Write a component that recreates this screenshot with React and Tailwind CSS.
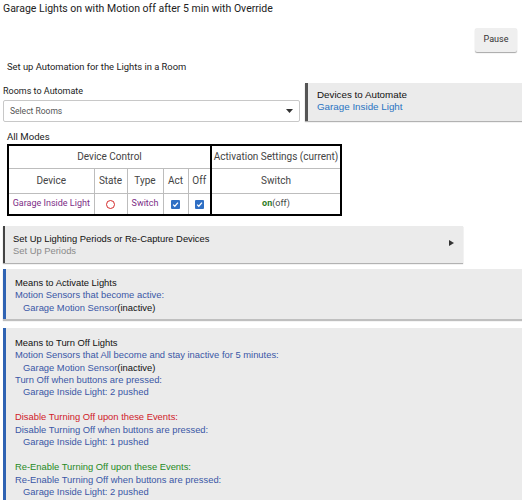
import React from "react";

function Check() {
  return (
    <span className="inline-flex w-[9px] h-[9px] bg-[#2f6fc4] rounded-[1px] items-center justify-center align-middle">
      <svg width="7" height="7" viewBox="0 0 8 8">
        <path d="M1.3 4.2 L3.2 6 L6.8 1.9" stroke="white" strokeWidth="1.4" fill="none" />
      </svg>
    </span>
  );
}

export default function App() {
  const box = "bg-[#ebebeb] font-['Liberation_Sans',Arial,sans-serif] text-[9.4px] leading-[12.3px]";
  const blue = "text-[#3a57a6]";
  return (
    <div className="w-[522px] h-[500px] overflow-hidden bg-white font-['Roboto',sans-serif] text-[#222]">
      <div className="pl-[3px] pt-[2px] text-[10.5px] leading-[14px] text-[#222]">
        Garage Lights on with Motion off after 5 min with Override
      </div>
      <div className="flex justify-end pr-[5px] mt-[12px]">
        <div className="w-[42px] h-[24px] bg-[#efefef] shadow-[0_1px_1px_rgba(0,0,0,0.35)] rounded-[2px] flex items-center justify-center text-[9px] text-[#333]">
          Pause
        </div>
      </div>
      <div className="pl-[7px] mt-[8px] text-[9.4px] leading-[13px] text-[#222]">
        Set up Automation for the Lights in a Room
      </div>
      <div className="flex mt-[10px] items-start">
        <div className="ml-[3px] w-[297px]">
          <div className="text-[9px] leading-[13px] mt-[2px] text-[#222]">Rooms to Automate</div>
          <div className="mt-[2px] h-[22px] border border-[#c8c8c8] rounded-[2px] flex items-center justify-between pl-[6px] pr-[6px] text-[8.5px] text-[#555]">
            <span>Select Rooms</span>
            <svg width="7" height="4" viewBox="0 0 7 4"><path d="M0 0 H7 L3.5 4 Z" fill="#333" /></svg>
          </div>
        </div>
        <div className={`ml-[5px] flex-1 h-[38px] border-l-[3px] border-[#555] bg-[#ebebeb] font-['Liberation_Sans',Arial,sans-serif] text-[9.8px] leading-[12.3px] shadow-[0_1px_1px_rgba(0,0,0,0.3)] pl-[9px] pt-[6px]`}>
          <div className="text-[#111]">Devices to Automate</div>
          <div className="text-[#2a74c2]">Garage Inside Light</div>
        </div>
      </div>
      <div className="pl-[7px] mt-[8px] text-[9.6px] leading-[13px] text-[#222]">All Modes</div>
      <div className="ml-[7px] mt-[1px] w-[335px]">
        <table className="border-collapse border-2 border-black text-[10px] text-[#444] w-full" style={{ tableLayout: "fixed" }}>
          <colgroup>
            <col style={{ width: 86 }} />
            <col style={{ width: 33 }} />
            <col style={{ width: 36 }} />
            <col style={{ width: 25 }} />
            <col style={{ width: 23 }} />
            <col />
          </colgroup>
          <tbody>
            <tr className="h-[23px]">
              <td colSpan={5} className="text-center border border-[#bdbdbd] border-r-2 border-r-black">Device Control</td>
              <td className="text-center border border-[#bdbdbd] whitespace-nowrap">Activation Settings (current)</td>
            </tr>
            <tr className="h-[25px]">
              <td className="text-center border border-[#bdbdbd]">Device</td>
              <td className="text-center border border-[#bdbdbd]">State</td>
              <td className="text-center border border-[#bdbdbd]">Type</td>
              <td className="text-center border border-[#bdbdbd]">Act</td>
              <td className="text-center border border-[#bdbdbd] border-r-2 border-r-black">Off</td>
              <td className="text-center border border-[#bdbdbd]">Switch</td>
            </tr>
            <tr className="h-[22px]">
              <td className="text-center border border-[#bdbdbd] text-[9px] text-[#7d2d86] whitespace-nowrap">Garage Inside Light</td>
              <td className="text-center border border-[#bdbdbd]">
                <span className="inline-block w-[9px] h-[9px] rounded-full border-[1.5px] border-[#d42a2a] align-middle" />
              </td>
              <td className="text-center border border-[#bdbdbd] text-[9px] text-[#7d2d86]">Switch</td>
              <td className="text-center border border-[#bdbdbd]"><Check /></td>
              <td className="text-center border border-[#bdbdbd] border-r-2 border-r-black"><Check /></td>
              <td className="text-center border border-[#bdbdbd] text-[9px]">
                <span className="text-[#2e7d1f] font-bold">on</span>(off)
              </td>
            </tr>
          </tbody>
        </table>
      </div>
      <div className={`ml-[3px] mt-[10px] w-[460px] h-[37px] border-l-[2px] border-[#444] ${box} shadow-[0_1px_1px_rgba(0,0,0,0.3)] pl-[8px] pt-[7px] flex justify-between`}>
        <div>
          <div className="text-[#111]">Set Up Lighting Periods or Re-Capture Devices</div>
          <div className="text-[#8a8a8a]">Set Up Periods</div>
        </div>
        <div className="pr-[9px] pt-[7px]">
          <svg width="5" height="6" viewBox="0 0 5 6"><path d="M0 0 L5 3 L0 6 Z" fill="#333" /></svg>
        </div>
      </div>
      <div className={`ml-[3px] mt-[6px] h-[50px] border-l-[3px] border-[#2f63b3] ${box} shadow-[0_2px_1px_rgba(0,0,0,0.25)] pl-[9px] pt-[8px]`}>
        <div className="text-[#111]">Means to Activate Lights</div>
        <div className={blue}>Motion Sensors that become active:</div>
        <div className={`${blue} pl-[8px]`}>Garage Motion Sensor<span className="text-[#111]">(inactive)</span></div>
      </div>
      <div className={`ml-[3px] mt-[9px] h-[200px] border-l-[3px] border-[#2f63b3] ${box} pl-[9px] pt-[9px]`}>
        <div className="text-[#111]">Means to Turn Off Lights</div>
        <div className={blue}>Motion Sensors that All become and stay inactive for 5 minutes:</div>
        <div className={`${blue} pl-[8px]`}>Garage Motion Sensor<span className="text-[#111]">(inactive)</span></div>
        <div className={blue}>Turn Off when buttons are pressed:</div>
        <div className={`${blue} pl-[8px]`}>Garage Inside Light: 2 pushed</div>
        <div className="h-[13px]" />
        <div className="text-[#d0202a]">Disable Turning Off upon these Events:</div>
        <div className={blue}>Disable Turning Off when buttons are pressed:</div>
        <div className={`${blue} pl-[8px]`}>Garage Inside Light: 1 pushed</div>
        <div className="h-[13px]" />
        <div className="text-[#1f8a1f]">Re-Enable Turning Off upon these Events:</div>
        <div className={blue}>Re-Enable Turning Off when buttons are pressed:</div>
        <div className={`${blue} pl-[8px]`}>Garage Inside Light: 2 pushed</div>
      </div>
    </div>
  );
}
